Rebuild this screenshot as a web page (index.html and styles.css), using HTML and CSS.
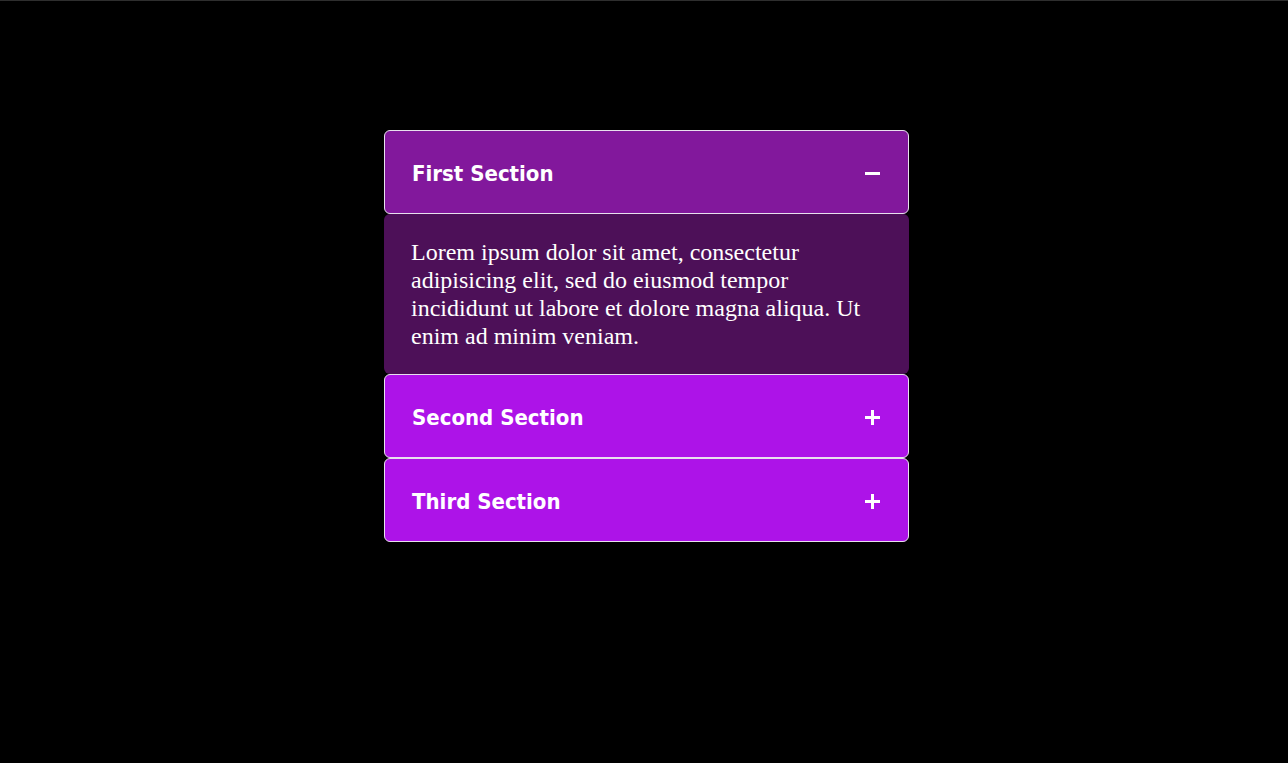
FILE: index.html
```html
<!DOCTYPE html>
<html lang="en">
<head>
<meta charset="utf-8">
<title>Accordion</title>
<link rel="stylesheet" href="styles.css">
</head>
<body>
<div class="topline"></div>
<main class="page">
  <section class="accordion">
    <div class="item open">
      <button class="head">
        <span class="title">First Section</span>
        <span class="icon minus"></span>
      </button>
      <div class="panel">
        <p>Lorem ipsum dolor sit amet, consectetur adipisicing elit, sed do eiusmod tempor incididunt ut labore et dolore magna aliqua. Ut enim ad minim veniam.</p>
      </div>
    </div>
    <div class="item">
      <button class="head">
        <span class="title">Second Section</span>
        <span class="icon plus"></span>
      </button>
    </div>
    <div class="item">
      <button class="head">
        <span class="title">Third Section</span>
        <span class="icon plus"></span>
      </button>
    </div>
  </section>
</main>
</body>
</html>
```

FILE: styles.css
```css
* { box-sizing: border-box; }
html, body { margin: 0; padding: 0; background: #000; }
body { min-height: 763px; }
.topline { height: 1px; background: #2e2e2e; }
.page {
  display: flex;
  justify-content: flex-start;
  padding: 129px 0 0 384px;
}
.accordion {
  width: 525px;
  display: flex;
  flex-direction: column;
}
.head {
  width: 100%;
  height: 84px;
  display: flex;
  align-items: center;
  justify-content: space-between;
  padding: 2px 28px 0 27px;
  border: 1px solid #e8e0ee;
  border-radius: 6px;
  background: #ad13e8;
  color: #fff;
  font-family: "DejaVu Sans Condensed", "DejaVu Sans", sans-serif;
  font-weight: bold;
  font-size: 22px;
  cursor: pointer;
  text-align: left;
}
.open .head { background: #82189c; }
.icon {
  position: relative;
  width: 15px;
  height: 15px;
  display: block;
}
.icon::before, .icon::after {
  content: "";
  position: absolute;
  background: #fff;
}
.icon::before { left: 0; top: 6px; width: 15px; height: 3px; }
.plus::after { left: 6px; top: 0; width: 3px; height: 15px; }
.panel {
  background: #4d1058;
  border-radius: 6px;
  padding: 24px 27px 24px 27px;
  color: #fff;
  font-family: "Liberation Serif", "Times New Roman", serif;
  font-size: 24px;
  line-height: 28px;
}
.panel p { margin: 0; }
```
